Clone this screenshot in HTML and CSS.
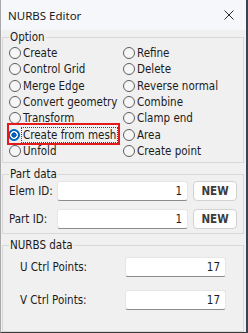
FILE: index.html
```html
<!DOCTYPE html>
<html>
<head>
	<meta charset="utf-8">
	<meta name="viewport" content="width=device-width"/>
	<link rel="stylesheet" href="styles.css">
</head>
<body>
<div class="window">
	<div class="titlebar">
		<span class="title">NURBS Editor</span>
		<svg class="close" width="10" height="10" viewBox="0 0 10 10">
			<path d="M0.5 0.5 L9.5 9.5 M9.5 0.5 L0.5 9.5" stroke="#2b2b2b" stroke-width="1" fill="none"/>
		</svg>
	</div>
	<div class="content">
		<fieldset class="group option">
			<legend>Option</legend>
			<div class="radios">
				<label class="radio"><input type="radio" name="op"><span>Create</span></label>
				<label class="radio"><input type="radio" name="op"><span>Refine</span></label>
				<label class="radio"><input type="radio" name="op"><span>Control Grid</span></label>
				<label class="radio"><input type="radio" name="op"><span>Delete</span></label>
				<label class="radio"><input type="radio" name="op"><span>Merge Edge</span></label>
				<label class="radio"><input type="radio" name="op"><span>Reverse normal</span></label>
				<label class="radio"><input type="radio" name="op"><span>Convert geometry</span></label>
				<label class="radio"><input type="radio" name="op"><span>Combine</span></label>
				<label class="radio"><input type="radio" name="op"><span>Transform</span></label>
				<label class="radio"><input type="radio" name="op"><span>Clamp end</span></label>
				<label class="radio marked"><input type="radio" name="op" checked><span class="focus">Create from mesh</span></label>
				<label class="radio"><input type="radio" name="op"><span>Area</span></label>
				<label class="radio"><input type="radio" name="op"><span>Unfold</span></label>
				<label class="radio"><input type="radio" name="op"><span>Create point</span></label>
			</div>
		</fieldset>
		<fieldset class="group part">
			<legend>Part data</legend>
			<div class="idrow">
				<span class="lbl">Elem ID:</span>
				<input class="field" type="text" value="1" readonly>
				<button class="btn">NEW</button>
			</div>
			<div class="idrow">
				<span class="lbl">Part ID:</span>
				<input class="field" type="text" value="1" readonly>
				<button class="btn">NEW</button>
			</div>
		</fieldset>
		<fieldset class="group nurbs">
			<legend>NURBS data</legend>
			<div class="ctrlrow">
				<span class="lbl">U Ctrl Points:</span>
				<input class="field" type="text" value="17" readonly>
			</div>
			<div class="ctrlrow">
				<span class="lbl">V Ctrl Points:</span>
				<input class="field" type="text" value="17" readonly>
			</div>
		</fieldset>
	</div>
</div>
</body>
</html>
```

FILE: styles.css
```css
* {
	padding: 0;
	margin: 0;
	box-sizing: border-box;
}

body {
	width: 248px;
	height: 333px;
	font-family: "DejaVu Sans Condensed", "DejaVu Sans", sans-serif;
	font-size: 11.5px;
	color: #1b1b1b;
	background: #f0f0f0;
}

.window {
	width: 248px;
	height: 333px;
	display: flex;
	flex-direction: column;
	background: #f0f0f0;
	border-left: 1px solid #a8a8a8;
	border-right: 2px solid #3b4350;
	border-bottom: 1px solid #3a3a3a;
}

.titlebar {
	height: 30px;
	flex: none;
	display: flex;
	align-items: center;
	justify-content: space-between;
	padding: 0 12px 0 7px;
	background: #f5f7fa;
	font-family: "Noto Sans", sans-serif;
	font-size: 11.5px;
	color: #1a1a1a;
}

.content {
	flex: 1;
	display: flex;
	flex-direction: column;
	padding: 0 2px 0 1px;
}

.group {
	border: 1px solid #d8d8d8;
	min-width: 0;
}

.group legend {
	padding: 0 1px;
	line-height: 14px;
}

.option {
	padding: 1px 4px 3px 6px;
}

.radios {
	display: grid;
	grid-template-columns: 114px 1fr;
	grid-auto-rows: 16.33px;
}

.radio {
	justify-self: start;
	display: inline-flex;
	align-items: center;
	gap: 2px;
	white-space: nowrap;
}

.radio input {
	appearance: none;
	-webkit-appearance: none;
	width: 12px;
	height: 12px;
	border: 1px solid #5e5e5e;
	border-radius: 50%;
	background: #f6f6f6;
	flex: none;
}

.radio input:checked {
	border-color: #0062c0;
	background: radial-gradient(circle, #0a5cb8 0 2.4px, #fff 2.9px 3.6px, #0067c0 4.2px);
}

.marked {
	position: relative;
	margin-left: -1px;
}

.marked::before {
	content: '';
	position: absolute;
	left: -1px;
	right: -3px;
	top: -4px;
	bottom: -2px;
	border: 2px solid #e3191c;
}

.focus {
	outline: 1px dotted #444;
	padding: 0 1px;
	line-height: 14px;
}

.part {
	margin-top: 4px;
	padding: 0 6px 4px 6px;
	display: flex;
	flex-direction: column;
	gap: 8px;
}

.idrow {
	display: grid;
	grid-template-columns: 48px 131px 1fr;
	height: 20px;
	align-items: center;
}

.idrow .lbl {
	margin-right: -3px;
}

.field {
	height: 20px;
	width: 100%;
	border: 1px solid #e6e6e6;
	border-bottom-color: #8c8c8c;
	border-radius: 3px;
	background: #fff;
	font: inherit;
	color: #1b1b1b;
	text-align: right;
	padding: 0 5px 0 4px;
	outline: none;
}

.btn {
	height: 20px;
	margin-left: 5px;
	border: 1px solid #d2d2d2;
	border-radius: 4px;
	background: #fdfdfd;
	font: inherit;
	font-weight: bold;
	color: #3a3a3a;
}

.nurbs {
	flex: 1;
	margin-top: 4px;
	padding: 5px 6px 0 17px;
	display: flex;
	flex-direction: column;
	gap: 13px;
}

.nurbs legend {
	margin-left: -11px;
}

.ctrlrow {
	display: grid;
	grid-template-columns: 105px 101px;
	height: 20px;
	align-items: center;
}
```
